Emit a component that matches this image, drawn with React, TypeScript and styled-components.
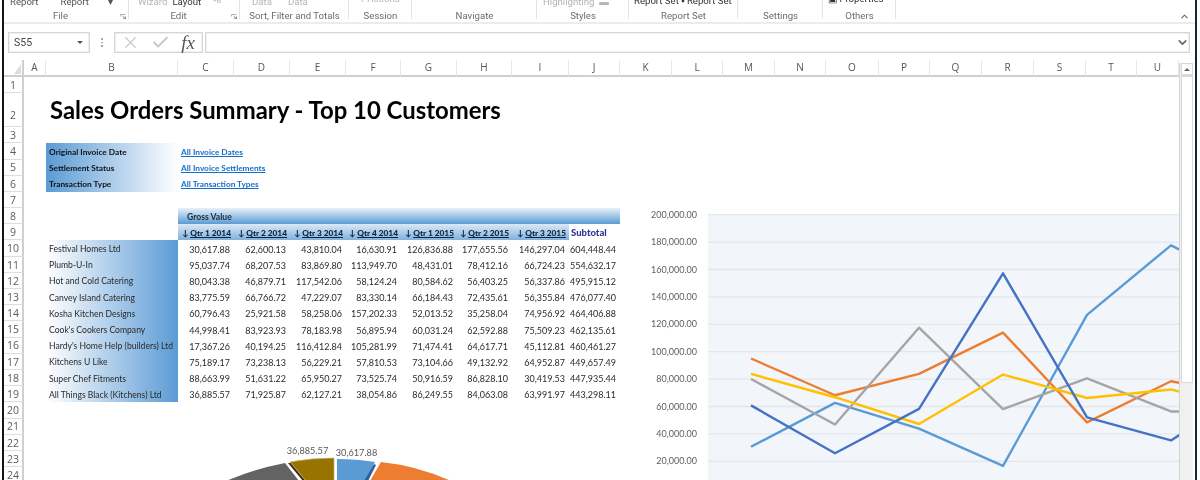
import React from 'react';
import styled, {createGlobalStyle} from 'styled-components';
import {Check, ChevronDown, ChevronUp, X} from 'lucide-react';

const GlobalStyle = createGlobalStyle`
  html, body {
    margin: 0;
    height: 480px;
    overflow: hidden;
    background: #fff;
  }
`;

const Window = styled.div`
  width: 1191px;
  height: 480px;
  margin-left: 2px;
  border-left: 2px solid #141414;
  border-right: 2px solid #12263a;
  overflow: hidden;
  background: #fff;
  filter: blur(0.4px);
  font-family: Roboto, 'Liberation Sans', sans-serif;
`;

/* ribbon: only the bottom of it shows, the tools are cut off by the top edge */
const Ribbon = styled.div`
  height: 22px;
  display: flex;
  align-items: flex-start;
  overflow: hidden;
  border-bottom: 2px solid #ececec;
`;

const RibbonGroup = styled.div<{$w: number}>`
  width: ${({$w}) => $w}px;
  height: 22px;
  flex: none;
  display: flex;
  flex-direction: column;
  justify-content: flex-end;
  box-sizing: border-box;
  position: relative;

  &::after {
    content: '';
    position: absolute;
    right: 0;
    top: 0;
    bottom: 3px;
    width: 1px;
    background: #e4e4e4;
  }
`;

const Tools = styled.div<{$pad?: number; $lift?: number}>`
  display: flex;
  flex: none;
  align-items: center;
  height: 14px;
  margin-bottom: ${({$lift}) => 1 + ($lift || 0)}px;
  padding-left: ${({$pad}) => $pad || 0}px;
  white-space: nowrap;
`;

const Tool = styled.span<{$off?: boolean; $dark?: boolean; $gap?: number}>`
  font-size: 9.6px;
  line-height: 14px;
  margin-right: ${({$gap}) => $gap || 0}px;
  color: ${({$off, $dark}) => ($off ? '#b4b4b4' : $dark ? '#333' : '#555')};
`;

const GroupName = styled.div<{$shift?: boolean}>`
  height: 12px;
  flex: none;
  line-height: 12px;
  text-align: center;
  font-size: 9.6px;
  color: #6c6c6c;
  white-space: nowrap;
  padding-right: ${({$shift}) => ($shift ? 12 : 0)}px;
`;

const Launcher = styled.svg`
  position: absolute;
  right: 3px;
  bottom: 3px;
  width: 6px;
  height: 5px;
`;

const Collapse = styled.div`
  margin-left: auto;
  padding-right: 5px;
  align-self: flex-end;
  color: #666;
  display: flex;
  height: 12px;
  align-items: center;
`;

const FormulaBar = styled.div`
  height: 36px;
  display: flex;
  align-items: flex-start;
  padding: 8px 5px 0 4px;
  box-sizing: border-box;
`;

const NameBox = styled.div`
  width: 82px;
  height: 21px;
  flex: none;
  box-sizing: border-box;
  border: 1px solid #d6d6d6;
  box-shadow: inset 0 0 0 1px #f0f0f0;
  display: flex;
  align-items: center;
  justify-content: space-between;
  padding: 0 6px 0 5px;
  font-size: 10.5px;
  color: #444;
`;

const Caret = styled.span`
  width: 0;
  height: 0;
  border-left: 3px solid transparent;
  border-right: 3px solid transparent;
  border-top: 3px solid #555;
`;

const Dots = styled.div`
  width: 24px;
  flex: none;
  height: 21px;
  display: flex;
  flex-direction: column;
  align-items: center;
  justify-content: center;
  gap: 2px;

  i {
    width: 1.5px;
    height: 1.5px;
    background: #a8a8a8;
  }
`;

const FxBox = styled.div`
  width: 89px;
  height: 21px;
  flex: none;
  box-sizing: border-box;
  border: 1px solid #d6d6d6;
  box-shadow: inset 0 0 0 1px #f0f0f0;
  display: flex;
  align-items: center;
  justify-content: space-between;
  padding: 0 7px 0 6px;
  color: #c8c8c8;
`;

const FxLabel = styled.span`
  font-family: 'Liberation Serif', serif;
  font-style: italic;
  font-size: 19px;
  color: #555;
`;

const FormulaInput = styled.div`
  flex: 1;
  height: 21px;
  margin-left: 2px;
  box-sizing: border-box;
  border: 1px solid #d6d6d6;
  box-shadow: inset 0 0 0 1px #f0f0f0;
  display: flex;
  align-items: center;
  justify-content: flex-end;
  color: #666;
`;

const SheetArea = styled.div`
  display: flex;
  align-items: flex-start;
`;

const Sheet = styled.div`
  position: relative;
  flex: none;
  display: grid;
  grid-template-columns: 20px 22px 132px 56px 56px 56px 55px 56px 55px 57px 51px 52px 51px 52px 51px 53px 51px 52px 52px 52px 51px 42px;
  grid-template-rows: 16.8px 16.2px 34.2px repeat(23, 16.2px);
`;

const Corner = styled.div`
  grid-column: 1;
  grid-row: 1;
  border-bottom: 2px solid #cfcfcf;
  border-right: 2px solid #cfcfcf;
  position: relative;

  &::after {
    content: '';
    position: absolute;
    right: 1px;
    bottom: 1px;
    border-left: 7px solid transparent;
    border-bottom: 10px solid #dcdcdc;
  }
`;

const ColHead = styled.div<{$col: number}>`
  grid-column: ${({$col}) => $col};
  grid-row: 1;
  border-bottom: 2px solid #cfcfcf;
  border-right: 1px solid #e6e6e6;
  display: flex;
  align-items: center;
  justify-content: center;
  font-family: 'Open Sans', sans-serif;
  font-size: 10px;
  color: #555;
`;

const RowHead = styled.div<{$row: number; $low?: boolean}>`
  grid-column: 1;
  grid-row: ${({$row}) => $row};
  border-bottom: 1px solid #dedede;
  border-right: 2px solid #cfcfcf;
  display: flex;
  justify-content: center;
  align-items: ${({$low}) => ($low ? 'flex-end' : 'center')};
  padding-top: ${({$low}) => ($low ? 0 : 1)}px;
  padding-bottom: ${({$low}) => ($low ? 6 : 0)}px;
  font-family: 'Open Sans', sans-serif;
  font-size: 10.5px;
  line-height: 1;
  color: #5c5c5c;
`;

const Title = styled.div`
  grid-column: 3 / 16;
  grid-row: 3;
  align-self: end;
  padding: 0 0 3px 4px;
  font-family: Lato, 'Liberation Sans', sans-serif;
  font-weight: 700;
  font-size: 23.9px;
  line-height: 28px;
  color: #000;
  white-space: nowrap;
`;

const Cell = styled.div<{$col: number; $row: number}>`
  grid-column: ${({$col}) => $col};
  grid-row: ${({$row}) => $row};
  display: flex;
  align-items: center;
  padding-top: 1px;
  white-space: nowrap;
  font-family: Lato, 'Liberation Sans', sans-serif;
  font-size: 9px;
  color: #2a2a2a;
`;

const FilterLabel = styled(Cell)`
  padding-left: 3px;
  font-size: 8.3px;
  font-weight: 700;
  color: #111;
  background: linear-gradient(90deg, #5b9bd5, #fff);
`;

const FilterLink = styled(Cell)`
  padding-left: 3px;
  font-size: 8.3px;
  font-weight: 700;
  color: #1270c8;
  text-decoration: underline;
`;

const GrossValue = styled.div`
  grid-column: 4 / 12;
  grid-row: 9;
  display: flex;
  align-items: center;
  padding-left: 9px;
  padding-top: 1px;
  font-family: Lato, 'Liberation Sans', sans-serif;
  font-size: 8.6px;
  font-weight: 700;
  color: #1d2b3a;
  background: linear-gradient(180deg, #e8f1f9, #5b9bd5);
`;

const QuarterHead = styled(Cell)`
  justify-content: flex-end;
  padding-right: 3px;
  gap: 2px;
  font-size: 8.3px;
  font-weight: 900;
  color: #10233a;
  background: linear-gradient(180deg, #dbe9f6, #7fb1de);

  span {
    text-decoration: underline;
  }
`;

const SubtotalHead = styled(Cell)`
  padding-left: 2px;
  font-weight: 900;
  font-size: 9.5px;
  color: #33339a;
`;

const CustomerCell = styled(Cell)`
  padding-left: 3px;
  font-size: 8.6px;
  background: linear-gradient(90deg, #fff, #5b9bd5);
`;

const AmountCell = styled(Cell)`
  justify-content: flex-end;
  padding-right: 4px;
`;

const LineChart = styled.svg`
  position: absolute;
  left: 636px;
  top: 140px;
  width: 539px;
  height: 280px;
  font-family: Lato, 'Liberation Sans', sans-serif;
`;

const PieChart = styled.svg`
  position: absolute;
  left: 216px;
  top: 380px;
  width: 250px;
  height: 40px;
  font-family: Lato, 'Liberation Sans', sans-serif;
`;

const Scrollbar = styled.div`
  width: 14px;
  height: 417px;
  margin-top: 3px;
  flex: none;
  background: #f0f0f0;
  display: flex;
  flex-direction: column;
  align-items: flex-end;
  border-left: 1px solid #d4d4d4;
  box-sizing: border-box;
`;

const ScrollArrow = styled.div`
  width: 12px;
  height: 13px;
  flex: none;
  background: #fff;
  border: 1px solid #d8d8d8;
  border-bottom-width: 2px;
  box-sizing: border-box;
  display: flex;
  align-items: center;
  justify-content: center;

  &::after {
    content: '';
    border-left: 3px solid transparent;
    border-right: 3px solid transparent;
    border-bottom: 3px solid #666;
  }
`;

const ScrollThumb = styled.div`
  width: 12px;
  height: 307px;
  flex: none;
  background: #fff;
  box-sizing: border-box;
  border: 1px solid #d8d8d8;
`;

type ToolDef = {label: string; kind?: string; gap?: number};
type GroupDef = {w: number; name: string; launcher?: boolean; pad?: number; lift?: number; tools: ToolDef[]};

const ribbon: GroupDef[] = [
  {
    w: 125,
    name: 'File',
    launcher: true,
    pad: 6,
    tools: [
      {label: 'Report', gap: 22},
      {label: 'Report ', gap: 19},
      {label: '▾'},
    ],
  },
  {
    w: 111,
    name: 'Edit',
    launcher: true,
    pad: 9,
    tools: [
      {label: 'Wizard', kind: 'off', gap: 5},
      {label: 'Layout', kind: 'dark', gap: 12},
      {label: '⁺ᴮ', kind: 'off'},
    ],
  },
  {
    w: 109,
    name: 'Sort, Filter and Totals',
    pad: 12,
    tools: [
      {label: 'Data', kind: 'off', gap: 16},
      {label: 'Data ', kind: 'off'},
    ],
  },
  {w: 63, name: 'Session', pad: 11, lift: 3, tools: [{label: '↓ Actions', kind: 'off'}]},
  {w: 125, name: 'Navigate', tools: []},
  {
    w: 92,
    name: 'Styles',
    pad: 6,
    tools: [
      {label: 'Highlighting', kind: 'off', gap: 5},
      {label: '▬', kind: 'off'},
    ],
  },
  {w: 109, name: 'Report Set', pad: 5, lift: 1, tools: [{label: 'Report Set ▪ Report Set', kind: 'dark'}]},
  {w: 85, name: 'Settings', tools: []},
  {w: 73, name: 'Others', pad: 5, lift: 3, tools: [{label: '▣ Properties', kind: 'dark'}]},
];

const columns = 'A B C D E F G H I J K L M N O P Q R S T U'.split(' ');
const quarters = ['Qtr 1 2014', 'Qtr 2 2014', 'Qtr 3 2014', 'Qtr 4 2014', 'Qtr 1 2015', 'Qtr 2 2015', 'Qtr 3 2015'];

const filters = [
  ['Original Invoice Date', 'All Invoice Dates'],
  ['Settlement Status', 'All Invoice Settlements'],
  ['Transaction Type', 'All Transaction Types'],
];

const customers: [string, string[]][] = [
  ['Festival Homes Ltd', ['30,617.88', '62,600.13', '43,810.04', '16,630.91', '126,836.88', '177,655.56', '146,297.04', '604,448.44']],
  ['Plumb-U-In', ['95,037.74', '68,207.53', '83,869.80', '113,949.70', '48,431.01', '78,412.16', '66,724.23', '554,632.17']],
  ['Hot and Cold Catering', ['80,043.38', '46,879.71', '117,542.06', '58,124.24', '80,584.62', '56,403.25', '56,337.86', '495,915.12']],
  ['Canvey Island Catering', ['83,775.59', '66,766.72', '47,229.07', '83,330.14', '66,184.43', '72,435.61', '56,355.84', '476,077.40']],
  ['Kosha Kitchen Designs', ['60,796.43', '25,921.58', '58,258.06', '157,202.33', '52,013.52', '35,258.04', '74,956.92', '464,406.88']],
  ["Cook's Cookers Company", ['44,998.41', '83,923.93', '78,183.98', '56,895.94', '60,031.24', '62,592.88', '75,509.23', '462,135.61']],
  ["Hardy's Home Help (builders) Ltd", ['17,367.26', '40,194.25', '116,412.84', '105,281.99', '71,474.41', '64,617.71', '45,112.81', '460,461.27']],
  ['Kitchens U Like', ['75,189.17', '73,238.13', '56,229.21', '57,810.53', '73,104.66', '49,132.92', '64,952.87', '449,657.49']],
  ['Super Chef Fitments', ['88,663.99', '51,631.22', '65,950.27', '73,525.74', '50,916.59', '86,828.10', '30,419.53', '447,935.44']],
  ['All Things Black (Kitchens) Ltd', ['36,885.57', '71,925.87', '62,127.21', '38,054.86', '86,249.55', '84,063.08', '63,991.97', '443,298.11']],
];

const seriesColors = ['#5b9bd5', '#ed7d31', '#a5a5a5', '#ffc000', '#4472c4'];
const yOf = (v: number) => 214.7 + ((200000 - v) * 27.4) / 20000;
const xOf = (i: number) => 751 + i * 84;
const ticks = [200000, 180000, 160000, 140000, 120000, 100000, 80000, 60000, 40000, 20000];

const LineChartView = () => (
  <LineChart viewBox="640 200 539 280">
    <rect x="708" y="214.7" width="471" height="270" fill="#f2f6fb" />
    {ticks.map(t => (
      <g key={t}>
        <line x1="708" x2="1179" y1={yOf(t)} y2={yOf(t)} stroke="#e3e7eb" strokeWidth="1.3" />
        <text x="697" y={yOf(t) + 3} textAnchor="end" fontSize="9" fill="#5f5f5f">
          {t.toLocaleString('en-US', {minimumFractionDigits: 2})}
        </text>
      </g>
    ))}
    {seriesColors.map((color, s) => (
      <polyline
        key={color}
        fill="none"
        stroke={color}
        strokeWidth="2.4"
        strokeLinejoin="round"
        points={customers[s][1]
          .slice(0, 7)
          .map((v, i) => `${xOf(i)},${yOf(parseFloat(v.replace(/,/g, '')))}`)
          .join(' ')}
      />
    ))}
  </LineChart>
);

const PieChartView = () => (
  <PieChart viewBox="220 440 250 40">
    <text x="307.5" y="453.5" textAnchor="middle" fontSize="9.2" fill="#595959">36,885.57</text>
    <text x="356.5" y="455.5" textAnchor="middle" fontSize="9.2" fill="#595959">30,617.88</text>
    <path d="M226,481 Q254,469 285,463 L299,481 Z" fill="#636363" />
    <path d="M288,463 L303,481 L306,481 L291,463 Z" fill="#3e2a10" />
    <path d="M290,462 Q311,458 334,458 L334,481 L306,481 Z" fill="#997300" stroke="#c9b57a" strokeWidth="0.7" />
    <path d="M337,459 Q357,459 375,462 L365,481 L337,481 Z" fill="#5b9bd5" />
    <path d="M374,464 L364,481 L368,481 L376,465 Z" fill="#2f5f94" />
    <path d="M381,462 Q418,466 451,481 L370,481 Z" fill="#ed7d31" />
  </PieChart>
);

export default function App() {
  return (
    <>
      <GlobalStyle />
      <Window>
        <Ribbon>
          {ribbon.map(g => (
            <RibbonGroup key={g.name} $w={g.w}>
              <Tools $pad={g.pad} $lift={g.lift}>
                {g.tools.map(t => (
                  <Tool key={t.label} $off={t.kind === 'off'} $dark={t.kind === 'dark'} $gap={t.gap}>
                    {t.label}
                  </Tool>
                ))}
              </Tools>
              <GroupName $shift={g.launcher}>{g.name}</GroupName>
              {g.launcher && (
                <Launcher viewBox="0 0 6 5">
                  <path d="M0.5 2.5V0.5H5.5" fill="none" stroke="#a0a0a0" strokeWidth="0.8" />
                  <path d="M2.5 2L5.5 4.7M5.7 2.4V4.7H3.2" fill="none" stroke="#777" strokeWidth="0.9" />
                </Launcher>
              )}
            </RibbonGroup>
          ))}
          <Collapse>
            <ChevronUp size={11} strokeWidth={2.2} />
          </Collapse>
        </Ribbon>

        <FormulaBar>
          <NameBox>
            S55
            <Caret />
          </NameBox>
          <Dots>
            <i />
            <i />
            <i />
          </Dots>
          <FxBox>
            <X size={19} strokeWidth={1.6} />
            <Check size={19} strokeWidth={2.4} />
            <FxLabel>fx</FxLabel>
          </FxBox>
          <FormulaInput>
            <ChevronDown size={13} strokeWidth={3} />
          </FormulaInput>
        </FormulaBar>

        <SheetArea>
          <Sheet>
            <Corner />
            {columns.map((c, i) => (
              <ColHead key={c} $col={i + 2}>
                {c}
              </ColHead>
            ))}
            {Array.from({length: 24}, (_, i) => (
              <RowHead key={i} $row={i + 2} $low={i === 1}>
                {i + 1}
              </RowHead>
            ))}

            <Title>Sales Orders Summary - Top 10 Customers</Title>

            {filters.map(([label, link], i) => (
              <React.Fragment key={label}>
                <FilterLabel $col={3} $row={i + 5}>
                  {label}
                </FilterLabel>
                <FilterLink $col={4} $row={i + 5}>
                  {link}
                </FilterLink>
              </React.Fragment>
            ))}

            <GrossValue>Gross Value</GrossValue>
            {quarters.map((q, i) => (
              <QuarterHead key={q} $col={i + 4} $row={10}>
                ↓ <span>{q}</span>
              </QuarterHead>
            ))}
            <SubtotalHead $col={11} $row={10}>
              Subtotal
            </SubtotalHead>

            {customers.map(([name, values], r) => (
              <React.Fragment key={name}>
                <CustomerCell $col={3} $row={r + 11}>
                  {name}
                </CustomerCell>
                {values.map((v, c) => (
                  <AmountCell key={c} $col={c + 4} $row={r + 11}>
                    {v}
                  </AmountCell>
                ))}
              </React.Fragment>
            ))}

            <LineChartView />
            <PieChartView />
          </Sheet>
          <Scrollbar>
            <ScrollArrow />
            <ScrollThumb />
          </Scrollbar>
        </SheetArea>
      </Window>
    </>
  );
}
